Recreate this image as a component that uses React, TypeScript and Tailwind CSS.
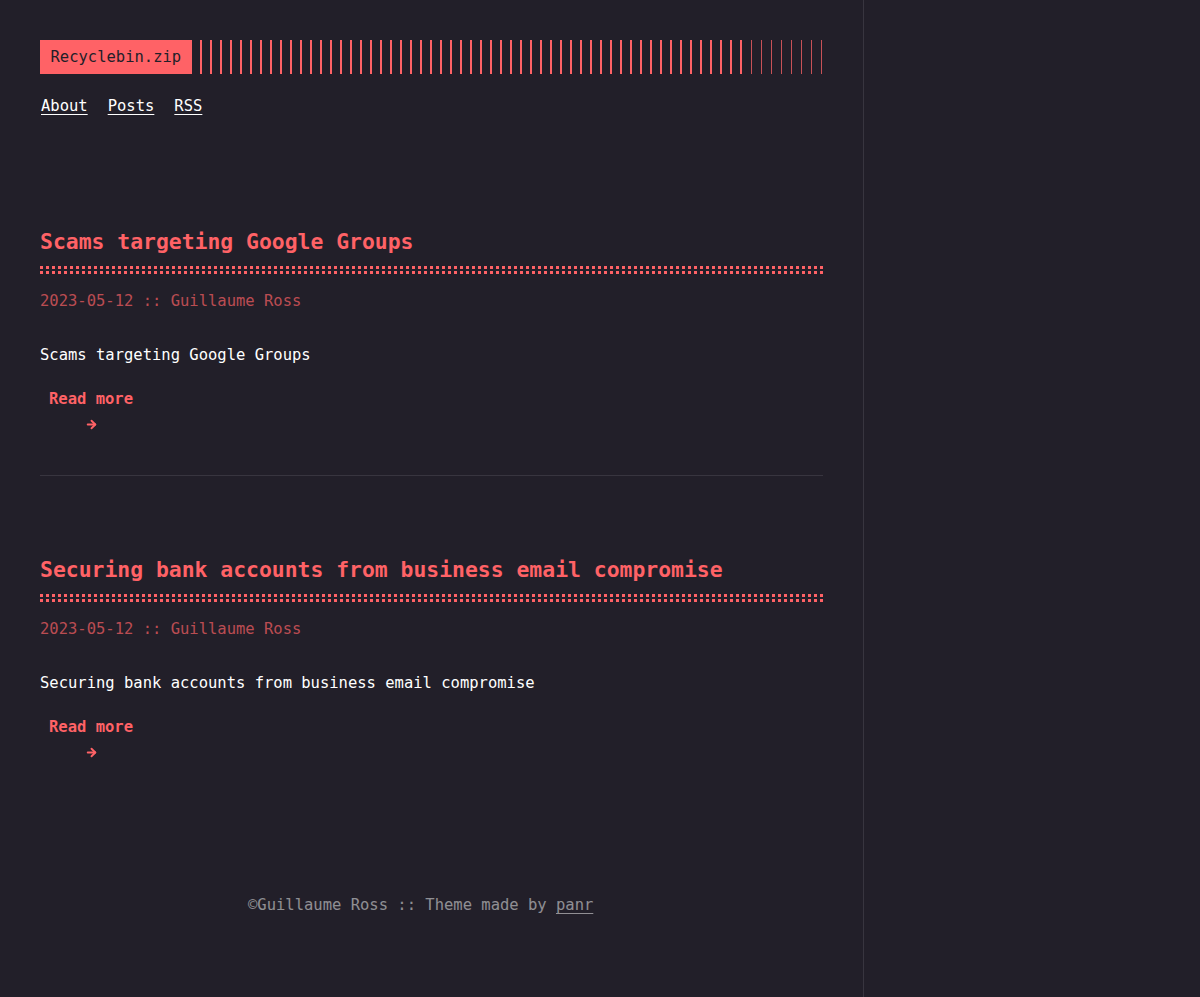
import { ArrowRight } from 'lucide-react';

interface Post {
  title: string;
  date: string;
  author: string;
  summary: string;
}

const posts: Post[] = [
  {
    title: 'Scams targeting Google Groups',
    date: '2023-05-12',
    author: 'Guillaume Ross',
    summary: 'Scams targeting Google Groups',
  },
  {
    title: 'Securing bank accounts from business email compromise',
    date: '2023-05-12',
    author: 'Guillaume Ross',
    summary: 'Securing bank accounts from business email compromise',
  },
];

function PostItem({ post, last }: { post: Post; last?: boolean }) {
  return (
    <article className={last ? '' : 'border-b border-[#38353f] pb-[38px]'}>
      <h2 className="pt-px text-[21.4px] leading-[28px] font-bold text-[#ff6266]">{post.title}</h2>
      <div className="mt-[10px] flex flex-col gap-[2px]">
        <div className="h-[3px] bg-[repeating-linear-gradient(90deg,#ff6266_0_3px,transparent_3px_6px)]" />
        <div className="h-[3px] bg-[repeating-linear-gradient(90deg,#ff6266_0_3px,transparent_3px_6px)]" />
      </div>
      <div className="mt-[15px] text-[#ff6266]/70">
        {post.date} :: {post.author}
      </div>
      <p className="mt-[29px] text-white">{post.summary}</p>
      <a href="#" className="mt-[19px] ml-[9px] inline-flex flex-col items-center font-bold text-[#ff6266]">
        <span>Read more</span>
        <span className="flex h-[25px] items-center">
          <ArrowRight className="h-[13px] w-[13px]" strokeWidth={3.5} />
        </span>
      </a>
    </article>
  );
}

export default function App() {
  return (
    <div className="min-h-[997px] bg-[#221f29] font-['DejaVu_Sans_Mono',monospace] text-[15.5px] leading-[25px] text-white">
      <div className="min-h-[997px] w-[864px] border-r border-[#38353f] px-10 pt-10">
        <header>
          <div className="flex items-center">
            <a href="#" className="flex h-[34px] items-center bg-[#ff6266] px-[10.5px] text-[#221f29]">
              Recyclebin.zip
            </a>
            <div className="ml-2 h-[34px] w-[542px] bg-[repeating-linear-gradient(90deg,#ff6266_0_2px,transparent_2px_10px)]" />
            <div className="ml-[9px] h-[34px] w-[71px] bg-[repeating-linear-gradient(90deg,rgba(255,98,102,0.75)_0_1px,transparent_1px_10px)]" />
          </div>
          <nav className="mt-[20px] flex gap-5 pl-px">
            <a href="#" className="underline underline-offset-[3px]">About</a>
            <a href="#" className="underline underline-offset-[3px]">Posts</a>
            <a href="#" className="underline underline-offset-[3px]">RSS</a>
          </nav>
        </header>

        <main className="mt-[108px] flex flex-col gap-[79px]">
          {posts.map((p, i) => (
            <PostItem key={p.title} post={p} last={i === posts.length - 1} />
          ))}
        </main>

        <footer className="mt-[128px] pl-[208px] text-white/50">
          ©Guillaume Ross :: Theme made by{' '}
          <a href="#" className="underline underline-offset-[3px]">panr</a>
        </footer>
      </div>
    </div>
  );
}
